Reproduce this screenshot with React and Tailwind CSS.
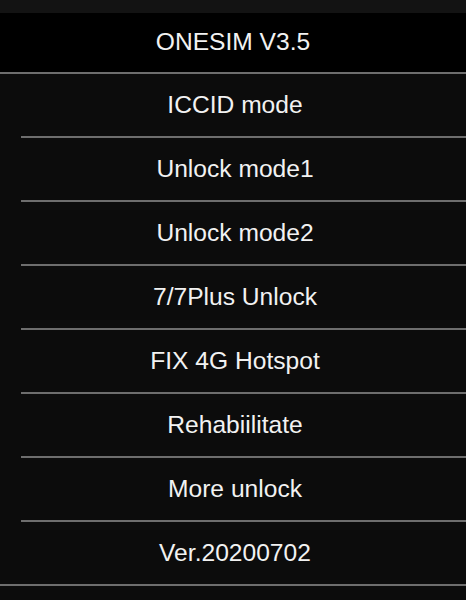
export default function App() {
  const items = [
    "ICCID mode",
    "Unlock mode1",
    "Unlock mode2",
    "7/7Plus Unlock",
    "FIX 4G Hotspot",
    "Rehabiilitate",
    "More unlock",
    "Ver.20200702",
  ];

  return (
    <div
      className="w-[466px] h-[600px] bg-[#0c0c0c] text-[#f2f2f2] overflow-hidden"
      style={{ fontFamily: '"Liberation Sans", Arial, sans-serif' }}
    >
      <div className="h-[13px] bg-[#131313]" />
      <div className="h-[59px] bg-black flex items-center justify-center text-[24.6px]">
        ONESIM V3.5
      </div>
      <div className="h-[2px] bg-[#6e6e6e]" />
      {items.map((label, i) => (
        <div key={label}>
          <div className="h-[62px] pl-[4px] flex items-center justify-center text-[24.6px]">{label}</div>
          <div className={i === items.length - 1 ? "h-[2px] bg-[#6e6e6e]" : "h-[2px] bg-[#6e6e6e] ml-[21px]"} />
        </div>
      ))}
    </div>
  );
}
